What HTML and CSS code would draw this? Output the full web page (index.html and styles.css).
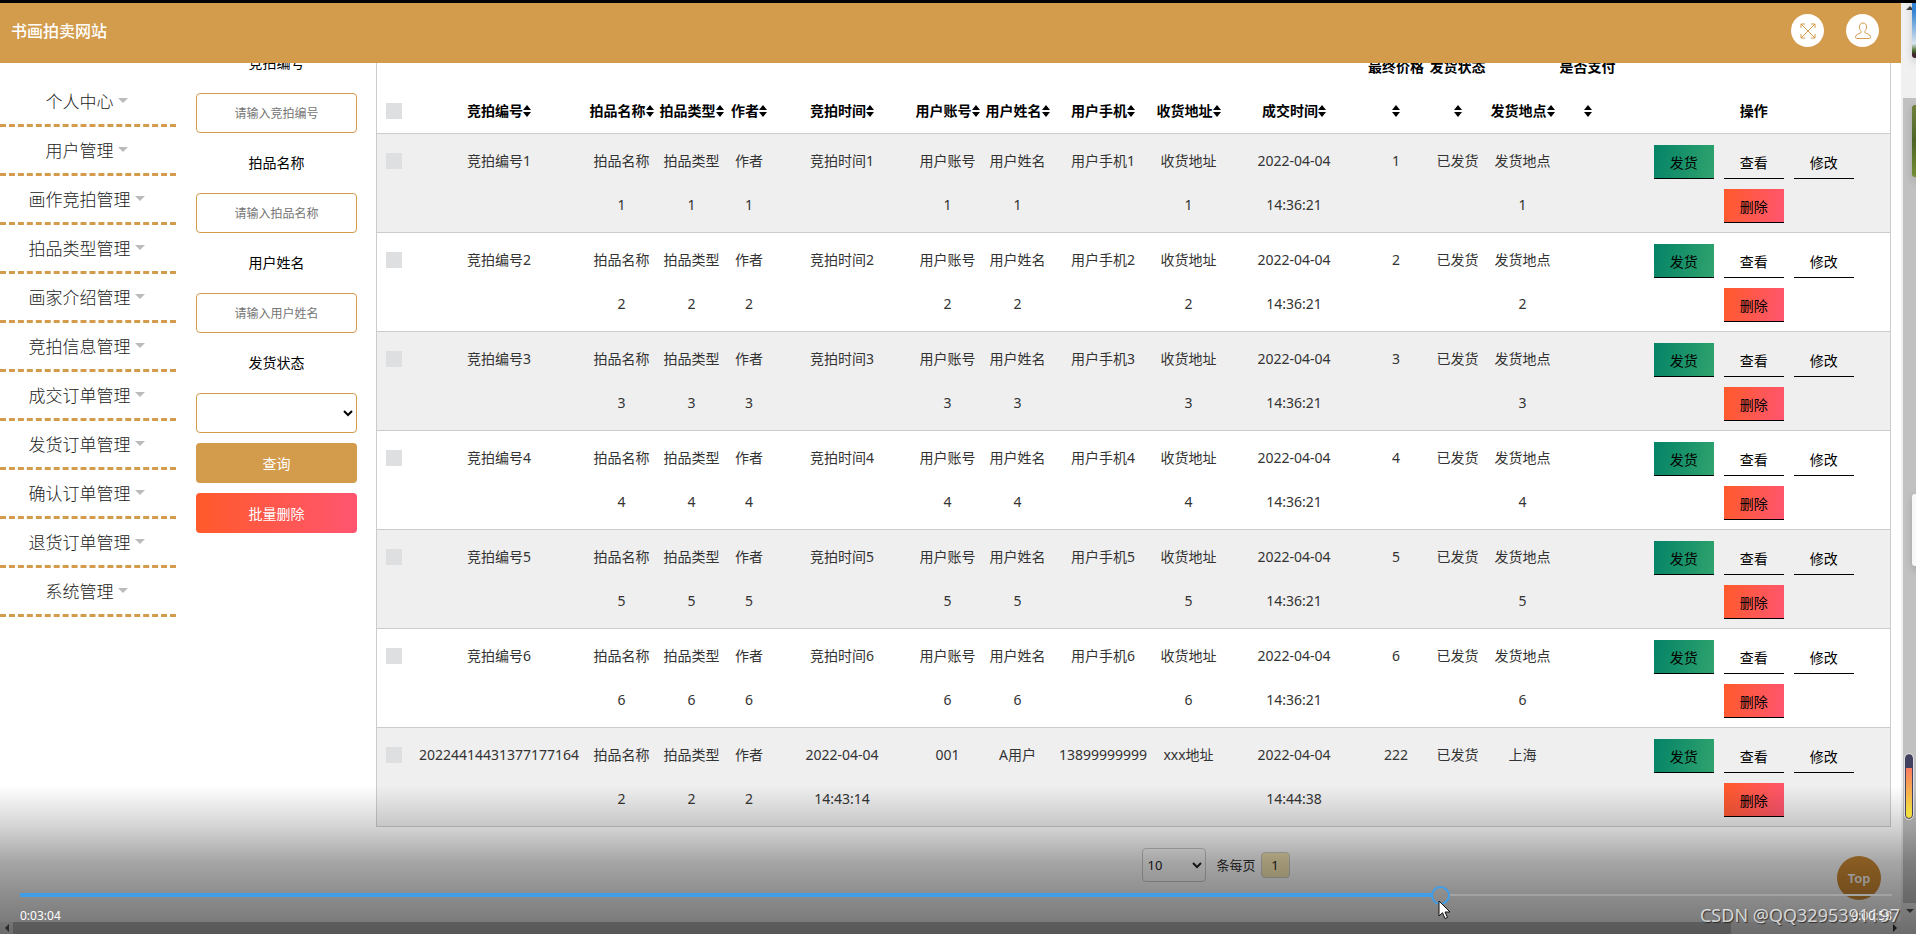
FILE: index.html
```html
<!DOCTYPE html>
<html lang="zh-CN">
<head>
<meta charset="utf-8">
<title>书画拍卖网站</title>
<link rel="stylesheet" href="styles.css">
</head>
<body>
<svg class="defs" aria-hidden="true">
  <symbol id="sort" viewBox="0 0 8 12"><path d="M4 0 8 5H0zM4 12 0 7h8z" fill="currentColor"/></symbol>
  <symbol id="caret" viewBox="0 0 10 5"><path d="M0 0h10L5 5z" fill="currentColor"/></symbol>
</svg>
<div class="app">
  <header class="topbar">
    <h1 class="brand">书画拍卖网站</h1>
    <div class="tools">
      <button class="tool" type="button" aria-label="全屏">
        <svg width="16" height="16" viewBox="0 0 16 16" fill="none" stroke="currentColor"><path d="M1 1l14 14M15 1 1 15M1 5V1h4M11 1h4v4M15 11v4h-4M5 15H1v-4"/></svg>
      </button>
      <button class="tool" type="button" aria-label="用户">
        <svg width="18" height="18" viewBox="0 0 18 18" fill="none" stroke="currentColor"><path d="M9 1c2.600 0 3.600 1.700 3.600 4 0 2-.8 3.300-1.800 4.300v1.300c0 .7 5.700 1.100 5.700 4.400 0 1.200-.5 1.500-1.500 1.500H3c-1 0-1.500-.3-1.500-1.500 0-3.300 5.700-3.700 5.700-4.400V9.300C6.200 8.300 5.400 7 5.400 5c0-2.300 1-4 3.600-4z"/></svg>
      </button>
    </div>
  </header>
  <main class="main">
    <nav class="sidebar">
      <a class="menu" href="#">个人中心<svg class="caret"><use href="#caret"/></svg></a>
      <a class="menu" href="#">用户管理<svg class="caret"><use href="#caret"/></svg></a>
      <a class="menu" href="#">画作竞拍管理<svg class="caret"><use href="#caret"/></svg></a>
      <a class="menu" href="#">拍品类型管理<svg class="caret"><use href="#caret"/></svg></a>
      <a class="menu" href="#">画家介绍管理<svg class="caret"><use href="#caret"/></svg></a>
      <a class="menu" href="#">竞拍信息管理<svg class="caret"><use href="#caret"/></svg></a>
      <a class="menu" href="#">成交订单管理<svg class="caret"><use href="#caret"/></svg></a>
      <a class="menu" href="#">发货订单管理<svg class="caret"><use href="#caret"/></svg></a>
      <a class="menu" href="#">确认订单管理<svg class="caret"><use href="#caret"/></svg></a>
      <a class="menu" href="#">退货订单管理<svg class="caret"><use href="#caret"/></svg></a>
      <a class="menu" href="#">系统管理<svg class="caret"><use href="#caret"/></svg></a>
    </nav>
    <form class="filters">
      <label class="label" for="f-no">竞拍编号</label>
      <input class="field" id="f-no" type="text" placeholder="请输入竞拍编号">
      <label class="label" for="f-name">拍品名称</label>
      <input class="field" id="f-name" type="text" placeholder="请输入拍品名称">
      <label class="label" for="f-user">用户姓名</label>
      <input class="field" id="f-user" type="text" placeholder="请输入用户姓名">
      <label class="label" for="f-state">发货状态</label>
      <select class="field" id="f-state"><option></option></select>
      <button class="action" type="button">查询</button>
      <button class="action danger" type="button">批量删除</button>
    </form>
    <section class="content">
      <table class="orders">
        <colgroup><col class="w-check"><col class="w-no"><col class="w-m"><col class="w-m"><col class="w-author"><col class="w-time"><col class="w-m"><col class="w-m"><col class="w-phone"><col class="w-m"><col class="w-time"><col class="w-price"><col class="w-s"><col class="w-m"><col class="w-s"><col></colgroup>
        <thead>
          <tr>
            <th><input class="tick" type="checkbox" aria-label="全选"></th>
            <th>竞拍编号<svg class="sort"><use href="#sort"/></svg></th>
            <th>拍品名称<svg class="sort"><use href="#sort"/></svg></th>
            <th>拍品类型<svg class="sort"><use href="#sort"/></svg></th>
            <th>作者<svg class="sort"><use href="#sort"/></svg></th>
            <th>竞拍时间<svg class="sort"><use href="#sort"/></svg></th>
            <th>用户账号<svg class="sort"><use href="#sort"/></svg></th>
            <th>用户姓名<svg class="sort"><use href="#sort"/></svg></th>
            <th>用户手机<svg class="sort"><use href="#sort"/></svg></th>
            <th>收货地址<svg class="sort"><use href="#sort"/></svg></th>
            <th>成交时间<svg class="sort"><use href="#sort"/></svg></th>
            <th>最终价格<svg class="sort"><use href="#sort"/></svg></th>
            <th>发货状态<svg class="sort"><use href="#sort"/></svg></th>
            <th>发货地点<svg class="sort"><use href="#sort"/></svg></th>
            <th>是否支付<svg class="sort"><use href="#sort"/></svg></th>
            <th>操作</th>
          </tr>
        </thead>
        <tbody>
          <tr><td><input class="tick" type="checkbox" aria-label="选择1"></td><td>竞拍编号1</td><td>拍品名称1</td><td>拍品类型1</td><td>作者1</td><td>竞拍时间1</td><td>用户账号1</td><td>用户姓名1</td><td>用户手机1</td><td>收货地址1</td><td>2022-04-04 14:36:21</td><td>1</td><td>已发货</td><td>发货地点1</td><td></td><td><div class="ops"><button class="op ship" type="button">发货</button><button class="op" type="button">查看</button><button class="op" type="button">修改</button><button class="op remove" type="button">删除</button></div></td></tr>
          <tr><td><input class="tick" type="checkbox" aria-label="选择2"></td><td>竞拍编号2</td><td>拍品名称2</td><td>拍品类型2</td><td>作者2</td><td>竞拍时间2</td><td>用户账号2</td><td>用户姓名2</td><td>用户手机2</td><td>收货地址2</td><td>2022-04-04 14:36:21</td><td>2</td><td>已发货</td><td>发货地点2</td><td></td><td><div class="ops"><button class="op ship" type="button">发货</button><button class="op" type="button">查看</button><button class="op" type="button">修改</button><button class="op remove" type="button">删除</button></div></td></tr>
          <tr><td><input class="tick" type="checkbox" aria-label="选择3"></td><td>竞拍编号3</td><td>拍品名称3</td><td>拍品类型3</td><td>作者3</td><td>竞拍时间3</td><td>用户账号3</td><td>用户姓名3</td><td>用户手机3</td><td>收货地址3</td><td>2022-04-04 14:36:21</td><td>3</td><td>已发货</td><td>发货地点3</td><td></td><td><div class="ops"><button class="op ship" type="button">发货</button><button class="op" type="button">查看</button><button class="op" type="button">修改</button><button class="op remove" type="button">删除</button></div></td></tr>
          <tr><td><input class="tick" type="checkbox" aria-label="选择4"></td><td>竞拍编号4</td><td>拍品名称4</td><td>拍品类型4</td><td>作者4</td><td>竞拍时间4</td><td>用户账号4</td><td>用户姓名4</td><td>用户手机4</td><td>收货地址4</td><td>2022-04-04 14:36:21</td><td>4</td><td>已发货</td><td>发货地点4</td><td></td><td><div class="ops"><button class="op ship" type="button">发货</button><button class="op" type="button">查看</button><button class="op" type="button">修改</button><button class="op remove" type="button">删除</button></div></td></tr>
          <tr><td><input class="tick" type="checkbox" aria-label="选择5"></td><td>竞拍编号5</td><td>拍品名称5</td><td>拍品类型5</td><td>作者5</td><td>竞拍时间5</td><td>用户账号5</td><td>用户姓名5</td><td>用户手机5</td><td>收货地址5</td><td>2022-04-04 14:36:21</td><td>5</td><td>已发货</td><td>发货地点5</td><td></td><td><div class="ops"><button class="op ship" type="button">发货</button><button class="op" type="button">查看</button><button class="op" type="button">修改</button><button class="op remove" type="button">删除</button></div></td></tr>
          <tr><td><input class="tick" type="checkbox" aria-label="选择6"></td><td>竞拍编号6</td><td>拍品名称6</td><td>拍品类型6</td><td>作者6</td><td>竞拍时间6</td><td>用户账号6</td><td>用户姓名6</td><td>用户手机6</td><td>收货地址6</td><td>2022-04-04 14:36:21</td><td>6</td><td>已发货</td><td>发货地点6</td><td></td><td><div class="ops"><button class="op ship" type="button">发货</button><button class="op" type="button">查看</button><button class="op" type="button">修改</button><button class="op remove" type="button">删除</button></div></td></tr>
          <tr><td><input class="tick" type="checkbox" aria-label="选择7"></td><td>20224414431377177164</td><td>拍品名称2</td><td>拍品类型2</td><td>作者2</td><td>2022-04-04 14:43:14</td><td>001</td><td>A用户</td><td>13899999999</td><td>xxx地址</td><td>2022-04-04 14:44:38</td><td>222</td><td>已发货</td><td>上海</td><td></td><td><div class="ops"><button class="op ship" type="button">发货</button><button class="op" type="button">查看</button><button class="op" type="button">修改</button><button class="op remove" type="button">删除</button></div></td></tr>
        </tbody>
      </table>
      <div class="pager">
        <select class="size" id="size"><option>10</option></select>
        <label class="per" for="size">条每页</label>
        <button class="page" type="button">1</button>
      </div>
    </section>
  </main>
  <div class="hscroll"><span class="hprev"></span><span class="hthumb"></span><span class="hnext"></span></div>
</div>
<aside class="edge">
  <div class="vtop"></div>
  <div class="vthumb"></div>
  <div class="vend"></div>
  <div class="thumb sky"></div>
  <div class="thumb grass"></div>
  <div class="thumb blank"></div>
  <div class="gauge"></div>
</aside>
<button class="totop" type="button">Top</button>
<div class="player">
  <div class="track"><div class="played"></div><div class="knob"></div><div class="rest"></div></div>
  <div class="times"><span>0:03:04</span><span>0:00:58</span></div>
</div>
<div class="mark">CSDN @QQ3295391197</div>
<svg class="cursor" width="13" height="20" viewBox="0 0 13 20"><path d="M1 1v15l3.500-3.300L7 18.500l2.500-1L7 12h5z" fill="#fff" stroke="#111"/></svg>
</body>
</html>
```

FILE: styles.css
```css
* { box-sizing: border-box; }

body {
  margin: 0;
  height: 100vh;
  overflow: hidden;
  display: flex;
  border-top: 3px solid #000;
  background: #fff;
  color: #333;
  font: 14px/20px "Noto Sans", "Noto Sans CJK SC", sans-serif;
}

button, input, select { font: inherit; margin: 0; }
.defs { position: absolute; width: 0; height: 0; }

.app { flex: 1; min-width: 0; display: flex; flex-direction: column; }

.topbar {
  flex: none;
  height: 60px;
  padding: 0 22px 5px 11px;
  display: flex;
  align-items: center;
  justify-content: space-between;
  background: #d39b4c;
}
.brand { margin: 0; color: #fff; font-size: 16px; line-height: 24px; font-weight: 500; }
.tools { display: flex; gap: 22px; }
.tool {
  width: 33px;
  height: 33px;
  padding: 0;
  border: 0;
  border-radius: 50%;
  display: grid;
  place-items: center;
  background: #fff;
  color: #d39b4c;
}

.main { flex: 1; min-height: 0; display: flex; overflow: hidden; }

.sidebar { flex: none; width: 176px; padding-top: 15px; }
.menu {
  display: flex;
  align-items: center;
  justify-content: center;
  gap: 4px;
  height: 49px;
  padding: 2px 3px 0 0;
  border-bottom: 3px dashed #d39b4c;
  color: #222;
  font-size: 17px;
  font-weight: 300;
  text-decoration: none;
}
.caret { width: 10px; height: 5px; margin-bottom: 4px; color: #bbb; }

.filters {
  flex: none;
  width: 161px;
  margin: -30px 19px 0 20px;
  display: flex;
  flex-direction: column;
}
.label { line-height: 60px; text-align: center; color: #000; }
.field {
  width: 100%;
  height: 40px;
  border: 1px solid #d39b4c;
  border-radius: 4px;
  background: #fff;
  text-align: center;
  font-size: 12px;
}
.field::placeholder { color: #757575; }
.action {
  height: 40px;
  margin-top: 10px;
  padding: 2px 0 0;
  border: 0;
  border-radius: 4px;
  background: #d39b4c;
  color: #fff;
}
.danger { background: linear-gradient(90deg, #ff5a2b, #ff5570); }

.content { flex: 1; min-width: 0; margin-top: -19px; padding-right: 10px; }
.orders {
  width: 100%;
  table-layout: fixed;
  border-collapse: collapse;
  border: 1px solid #ccc;
  text-align: center;
  line-height: 44px;
}
.orders th { padding: 0 1px; vertical-align: bottom; color: #000; font-weight: 600; }
.orders td { padding: 5px 6px; vertical-align: top; }
.orders tr { border-bottom: 1px solid #ccc; }
.orders tbody tr:nth-child(odd) { background: #efefef; }
.w-check { width: 35px; }
.w-no { width: 175px; }
.w-m { width: 70px; }
.w-author { width: 45px; }
.w-time { width: 141px; }
.w-phone { width: 101px; }
.w-price { width: 63px; }
.w-s { width: 60px; }
.sort { width: 8px; height: 12px; vertical-align: -1px; }
.tick {
  appearance: none;
  width: 16px;
  height: 16px;
  background: #dedfe1;
  vertical-align: middle;
}
.orders .tick { margin-top: -2px; }

.ops { display: flex; flex-wrap: wrap; justify-content: center; gap: 10px; width: 200px; margin: 6px auto 0; line-height: 20px; }
.op {
  width: 60px;
  height: 34px;
  padding: 2px 0 0;
  border: 0;
  border-bottom: 1px solid #000;
  background: transparent;
  color: #000;
}
.ship { background: linear-gradient(100deg, #048367, #30a36e); }
.remove { background: linear-gradient(100deg, #ff5a2b, #ff5570); }

.pager { display: flex; align-items: center; justify-content: center; padding: 21px 0 0 165px; color: #333; font-size: 13px; }
.size { width: 64px; height: 34px; border: 1px solid #ccc; border-radius: 4px; background: transparent; color: #222; }
.per { margin: 0 5px 0 10px; }
.page { width: 29px; height: 26px; padding: 0; border: 1px solid #ccc; border-radius: 4px; background: #f7e8b5; color: #222; }

.hscroll { flex: none; height: 12px; display: flex; background: #f0f0f0; }
.hprev, .hnext { width: 13px; display: grid; place-items: center; }
.hprev::before { content: ""; border: 4px solid transparent; border-right-color: #555; border-left: 0; }
.hnext::before { content: ""; border: 4px solid transparent; border-left-color: #333; border-right: 0; }
.hthumb { flex: 1; margin-right: 157px; background: #c1c1c1; }

.edge { position: relative; flex: none; width: 15px; display: flex; flex-direction: column; background: #f0f0f0; }
.vtop { height: 95px; padding: 3px 0 0 5px; }
.vtop::before { content: ""; display: block; width: 0; border: 4px solid transparent; border-top: 0; border-bottom-color: #444; }
.vthumb { flex: 1; margin-left: 2px; background: #c1c1c1; }
.vend { height: 31px; padding: 6px 0 0 5px; }
.vend::before { content: ""; display: block; width: 0; border: 4px solid transparent; border-bottom: 0; border-top-color: #555; }
.thumb { position: absolute; left: 11px; right: 0; height: 72px; border-radius: 3px 0 0 3px; box-shadow: 3px 3px 10px rgba(0, 0, 0, .4); }
.sky { top: -17px; height: 72px; background: linear-gradient(#3484d4 35%, #d8e4ee 80%, #476b2c 90%, #40242b 95%); }
.grass { top: 102px; background: linear-gradient(#71813d, #4c6426 50%, #748e36); }
.blank { top: 491px; background: #f8f8f8; }
.gauge {
  position: absolute;
  left: 4px;
  top: 751px;
  width: 8px;
  height: 65px;
  border: 1px solid #42415f;
  border-radius: 4px;
  outline: 1px solid #ddd;
  background: linear-gradient(#42415f 20%, #fa7b62 20%, #f2dc3f 90%);
  z-index: 3;
}
.totop {
  position: absolute;
  right: 35px;
  bottom: 34px;
  width: 44px;
  height: 44px;
  padding: 0;
  border: 0;
  border-radius: 50%;
  background: #d08c34;
  color: #fff;
  font-size: 13px;
  font-weight: 600;
}

.player {
  position: absolute;
  inset: auto 0 0 0;
  height: 148px;
  padding: 98px 24px 0 20px;
  background: linear-gradient(rgba(0, 0, 0, 0), rgba(0, 0, 0, .18) 29%, rgba(0, 0, 0, .35) 51%, rgba(0, 0, 0, .45) 74%, rgba(0, 0, 0, .55));
  color: #fff;
  font-size: 12px;
}
.track { display: flex; align-items: center; height: 22px; }
.played { flex: 1411; height: 4px; background: #409de8; }
.knob { width: 19px; height: 19px; border: 2px solid #409de8; border-radius: 50%; }
.rest { flex: 442; height: 2px; background: #a3a3a3; }
.times { display: flex; justify-content: space-between; }
.mark {
  position: absolute;
  right: 16px;
  bottom: 6px;
  color: rgba(255, 255, 255, .75);
  font-size: 18px;
  line-height: 26px;
  text-shadow: 1px 1px 1px rgba(0, 0, 0, .6);
}
.cursor { position: absolute; left: 1438px; top: 900px; }
```
